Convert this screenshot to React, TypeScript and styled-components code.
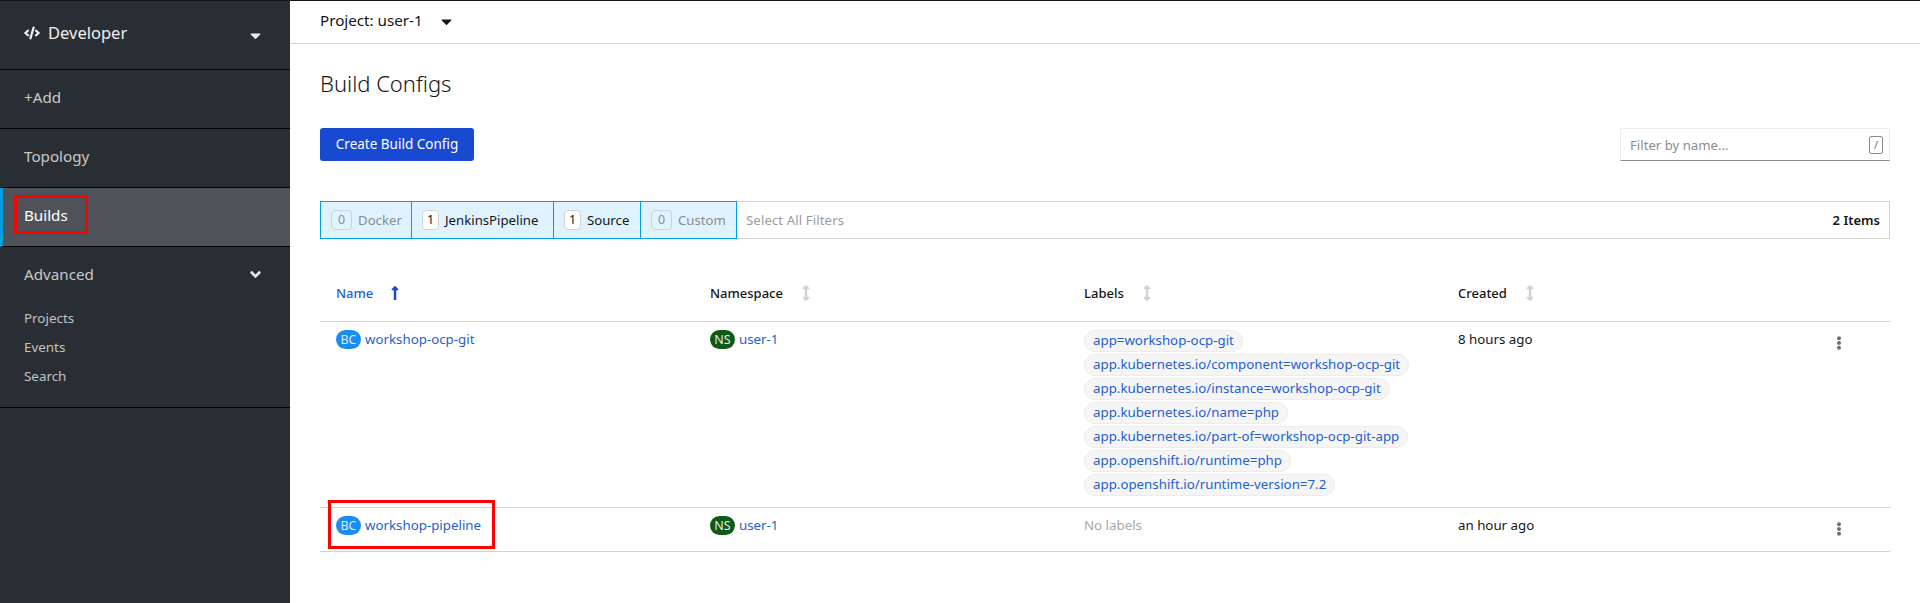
import React from "react";
import styled, { createGlobalStyle } from "styled-components";
import {
  FaAngleDown,
  FaArrowsAltV,
  FaCaretDown,
  FaCode,
  FaEllipsisV,
  FaLongArrowAltUp,
} from "react-icons/fa";

const GlobalStyle = createGlobalStyle`
  html, body {
    margin: 0;
    padding: 0;
    background: #fff;
    font-family: "Noto Sans", "Open Sans", sans-serif;
  }
`;

const Page = styled.div`
  position: relative;
  display: flex;
  height: 603px;
  overflow: hidden;
  border-top: 1px solid #151515;
  box-sizing: border-box;
`;

const Sidebar = styled.nav`
  width: 290px;
  flex: none;
  background: #292e34;
  color: #d2d2d2;
`;

const Switcher = styled.div`
  padding: 0 26px 5px 24px;
  box-sizing: border-box;
  height: 69px;
  display: flex;
  align-items: center;
  color: #f0f0f0;
  font-size: 16.5px;
  border-bottom: 1px solid #030303;

  svg:first-child {
    font-size: 16px;
    margin-right: 8px;
  }
  svg:last-child {
    font-size: 17px;
    margin-top: 5px;
  }
`;

const Grow = styled.span`
  flex: 1;
`;

const NavItem = styled.div<{ $active?: boolean }>`
  height: 59px;
  display: flex;
  align-items: center;
  padding-left: ${(p) => (p.$active ? "21px" : "24px")};
  padding-bottom: 5px;
  box-sizing: border-box;
  font-size: 15.2px;
  border-bottom: 1px solid #030303;
  color: ${(p) => (p.$active ? "#fff" : "#c9c9c9")};
  background: ${(p) => (p.$active ? "#4f5359" : "transparent")};
  border-left: ${(p) => (p.$active ? "3px solid #00a0e0" : "none")};
`;

const Group = styled.div`
  border-bottom: 1px solid #030303;
  height: 161px;
  box-sizing: border-box;
`;

const GroupTitle = styled.div`
  height: 57px;
  display: flex;
  align-items: center;
  padding: 0 26px 3px 24px;
  box-sizing: border-box;
  font-size: 15.2px;
  color: #c9c9c9;
  svg {
    font-size: 17px;
    color: #e4e4e4;
  }
`;

const SubItem = styled.div`
  height: 29px;
  line-height: 29px;
  padding-left: 24px;
  font-size: 13.4px;
  color: #c3c3c3;
`;

const Main = styled.main`
  flex: 1;
  min-width: 0;
`;

const ProjectBar = styled.header`
  height: 43px;
  box-sizing: border-box;
  display: flex;
  align-items: center;
  padding: 0 0 4px 30px;
  border-bottom: 1px solid #d2d2d2;
  font-size: 15.2px;
  color: #151515;
  svg {
    margin-left: 15px;
    font-size: 17px;
    margin-top: 3px;
  }
`;

const Content = styled.div`
  padding: 0 30px;
`;

const Title = styled.h1`
  margin: 24px 0 0;
  font-size: 22px;
  line-height: 30px;
  font-weight: 300;
  color: #151515;
`;

const Toolbar = styled.div`
  margin-top: 30px;
  display: flex;
  justify-content: space-between;
  align-items: flex-start;
`;

const PrimaryButton = styled.button`
  width: 154px;
  height: 33px;
  border: none;
  border-radius: 3px;
  background: #1749d1;
  color: #fff;
  font: inherit;
  font-size: 13.5px;
  padding: 0 0 1px;
`;

const SearchBox = styled.div`
  width: 270px;
  height: 33px;
  box-sizing: border-box;
  border: 1px solid #ededed;
  border-bottom-color: #8a8d90;
  display: flex;
  align-items: center;
  justify-content: space-between;
  padding: 0 6px 0 9px;
  font-size: 13.2px;
  color: #8a8d90;
`;

const Kbd = styled.span`
  width: 14px;
  height: 18px;
  box-sizing: border-box;
  border: 1px solid #8a8d90;
  border-radius: 2px;
  font-size: 11px;
  line-height: 16px;
  text-align: center;
  color: #6a6e73;
`;

const FilterBar = styled.div`
  margin-top: 40px;
  height: 38px;
  box-sizing: border-box;
  border: 1px solid #d2d2d2;
  display: flex;
  align-items: stretch;
`;

const FilterCell = styled.div<{ $width: number; $on?: boolean }>`
  width: ${(p) => p.$width}px;
  margin: -1px 0 -1px -1px;
  box-sizing: border-box;
  border: 1px solid #00a0e0;
  background: #def3ff;
  display: flex;
  align-items: center;
  padding-left: 10px;
  font-size: 13.2px;
  color: ${(p) => (p.$on ? "#151515" : "#8a8d90")};
`;

const Count = styled.span<{ $on?: boolean }>`
  width: ${(p) => (p.$on ? "17px" : "21px")};
  height: 20px;
  box-sizing: border-box;
  margin-right: ${(p) => (p.$on ? "6px" : "6px")};
  border: 1px solid #d2d2d2;
  border-radius: 4px;
  background: ${(p) => (p.$on ? "#fff" : "transparent")};
  text-align: center;
  line-height: 18px;
  font-size: 12.5px;
`;

const SelectAll = styled.span`
  margin-left: 9px;
  align-self: center;
  font-size: 13.2px;
  letter-spacing: 0.1px;
  color: #9a9c9f;
`;

const ItemCount = styled.span`
  margin-left: auto;
  margin-right: 9px;
  align-self: center;
  font-size: 13px;
  font-weight: 600;
  color: #151515;
`;

const Row = styled.div`
  display: grid;
  grid-template-columns: 374px 374px 374px 1fr 60px;
  border-bottom: 1px solid #d2d2d2;
`;

const HeadRow = styled(Row)`
  margin-top: 35px;
  height: 48px;
  align-items: center;
  padding-bottom: 10px;
  box-sizing: border-box;
`;

const HeadCell = styled.div<{ $sorted?: boolean }>`
  padding-left: 16px;
  display: flex;
  align-items: center;
  font-size: 13px;
  font-weight: 500;
  color: ${(p) => (p.$sorted ? "#1f5fd0" : "#151515")};
  svg {
    margin-left: ${(p) => (p.$sorted ? "14px" : "15px")};
    font-size: 16px;
    color: ${(p) => (p.$sorted ? "#1749d1" : "#d2d2d2")};
  }
`;

const Cell = styled.div`
  padding: 8px 0 16px 16px;
  font-size: 13.3px;
  line-height: 19px;
  color: #151515;
`;

const ResourceLink = styled.div`
  display: flex;
  align-items: center;
  color: #1f5fd0;
`;

const Badge = styled.span<{ $bg: string }>`
  width: 25px;
  height: 19px;
  border-radius: 10px;
  margin-right: 4px;
  background: ${(p) => p.$bg};
  color: #dfeaf6;
  font-size: 12.5px;
  line-height: 19px;
  text-align: center;
`;

const LabelList = styled.div`
  display: flex;
  flex-direction: column;
  align-items: flex-start;
  gap: 2px;
  margin-bottom: -5px;
`;

const LabelPill = styled.span`
  height: 22px;
  box-sizing: border-box;
  padding: 0 8px;
  border: 1px solid #ececec;
  border-radius: 11px;
  background: #f5f5f5;
  color: #1f5fd0;
  font-size: 13.3px;
  line-height: 18px;
  white-space: nowrap;
`;

const Muted = styled.span`
  color: #a8a8a8;
`;

const Kebab = styled.div`
  padding: 13px 0 0 2px;
  color: #6a6e73;
  font-size: 14px;
`;

const Highlight = styled.div<{ $x: number; $y: number; $w: number; $h: number }>`
  position: absolute;
  left: ${(p) => p.$x}px;
  top: ${(p) => p.$y - 1}px;
  width: ${(p) => p.$w}px;
  height: ${(p) => p.$h}px;
  box-sizing: border-box;
  border: 3px solid #ff0000;
`;

const labels = [
  "app=workshop-ocp-git",
  "app.kubernetes.io/component=workshop-ocp-git",
  "app.kubernetes.io/instance=workshop-ocp-git",
  "app.kubernetes.io/name=php",
  "app.kubernetes.io/part-of=workshop-ocp-git-app",
  "app.openshift.io/runtime=php",
  "app.openshift.io/runtime-version=7.2",
];

const filters = [
  { name: "Docker", count: 0, width: 92 },
  { name: "JenkinsPipeline", count: 1, width: 143 },
  { name: "Source", count: 1, width: 88 },
  { name: "Custom", count: 0, width: 97 },
];

export default function App() {
  return (
    <>
      <GlobalStyle />
      <Page>
        <Sidebar>
          <Switcher>
            <FaCode />
            <Grow>Developer</Grow>
            <FaCaretDown />
          </Switcher>
          <NavItem>+Add</NavItem>
          <NavItem>Topology</NavItem>
          <NavItem $active>Builds</NavItem>
          <Group>
            <GroupTitle>
              <Grow>Advanced</Grow>
              <FaAngleDown />
            </GroupTitle>
            <SubItem>Projects</SubItem>
            <SubItem>Events</SubItem>
            <SubItem>Search</SubItem>
          </Group>
        </Sidebar>
        <Main>
          <ProjectBar>
            Project: user-1
            <FaCaretDown />
          </ProjectBar>
          <Content>
            <Title>Build Configs</Title>
            <Toolbar>
              <PrimaryButton>Create Build Config</PrimaryButton>
              <SearchBox>
                Filter by name...
                <Kbd>/</Kbd>
              </SearchBox>
            </Toolbar>
            <FilterBar>
              {filters.map((f) => (
                <FilterCell key={f.name} $width={f.width} $on={f.count > 0}>
                  <Count $on={f.count > 0}>{f.count}</Count>
                  {f.name}
                </FilterCell>
              ))}
              <SelectAll>Select All Filters</SelectAll>
              <ItemCount>2 Items</ItemCount>
            </FilterBar>
            <HeadRow>
              <HeadCell $sorted>
                Name
                <FaLongArrowAltUp />
              </HeadCell>
              <HeadCell>
                Namespace
                <FaArrowsAltV />
              </HeadCell>
              <HeadCell>
                Labels
                <FaArrowsAltV />
              </HeadCell>
              <HeadCell>
                Created
                <FaArrowsAltV />
              </HeadCell>
            </HeadRow>
            <Row>
              <Cell>
                <ResourceLink>
                  <Badge $bg="#1a8cf5">BC</Badge>
                  workshop-ocp-git
                </ResourceLink>
              </Cell>
              <Cell>
                <ResourceLink>
                  <Badge $bg="#0f5a16">NS</Badge>
                  user-1
                </ResourceLink>
              </Cell>
              <Cell>
                <LabelList>
                  {labels.map((l) => (
                    <LabelPill key={l}>{l}</LabelPill>
                  ))}
                </LabelList>
              </Cell>
              <Cell>8 hours ago</Cell>
              <Kebab>
                <FaEllipsisV />
              </Kebab>
            </Row>
            <Row>
              <Cell>
                <ResourceLink>
                  <Badge $bg="#1a8cf5">BC</Badge>
                  workshop-pipeline
                </ResourceLink>
              </Cell>
              <Cell>
                <ResourceLink>
                  <Badge $bg="#0f5a16">NS</Badge>
                  user-1
                </ResourceLink>
              </Cell>
              <Cell>
                <Muted>No labels</Muted>
              </Cell>
              <Cell>an hour ago</Cell>
              <Kebab>
                <FaEllipsisV />
              </Kebab>
            </Row>
          </Content>
        </Main>
        <Highlight $x={14} $y={195} $w={74} $h={39} />
        <Highlight $x={328} $y={500} $w={167} $h={49} />
      </Page>
    </>
  );
}
